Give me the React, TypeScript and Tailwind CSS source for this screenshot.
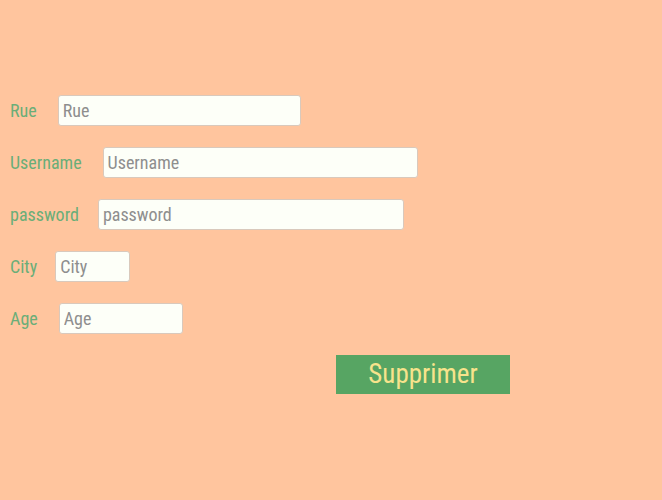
import React from "react";

const fields = [
  { label: "Rue", w: "w-[243px]", gap: "gap-[21px]" },
  { label: "Username", w: "w-[315px]", gap: "gap-[21px]" },
  { label: "password", w: "w-[306px]", gap: "gap-[19px]" },
  { label: "City", w: "w-[75px]", gap: "gap-[18px]" },
  { label: "Age", w: "w-[124px]", gap: "gap-[21px]" },
];

export default function App() {
  return (
    <div className="min-h-[500px] w-full bg-[#ffc59e] pt-[95px] font-['Liberation_Sans_Narrow','Roboto_Condensed','Liberation_Sans',sans-serif]">
      <form className="flex flex-col gap-[21px] pl-[10px]">
        {fields.map((f) => (
          <div key={f.label} className={`flex items-center ${f.gap} h-[31px]`}>
            <label className="text-[18px] text-[#6aae78]">{f.label}</label>
            <input
              placeholder={f.label}
              className={`${f.w} h-[31px] rounded-[3px] border border-[#d9c9bc] bg-[#fdfff8] px-[4px] text-[18px] text-[#555] placeholder:text-[#8e8e8e] outline-none`}
            />
          </div>
        ))}
        <div className="flex pl-[326px]">
          <button
            type="button"
            className="w-[174px] h-[39px] bg-[#57a563] text-[27px] text-[#f7e38c] leading-none"
          >
            Supprimer
          </button>
        </div>
      </form>
    </div>
  );
}
